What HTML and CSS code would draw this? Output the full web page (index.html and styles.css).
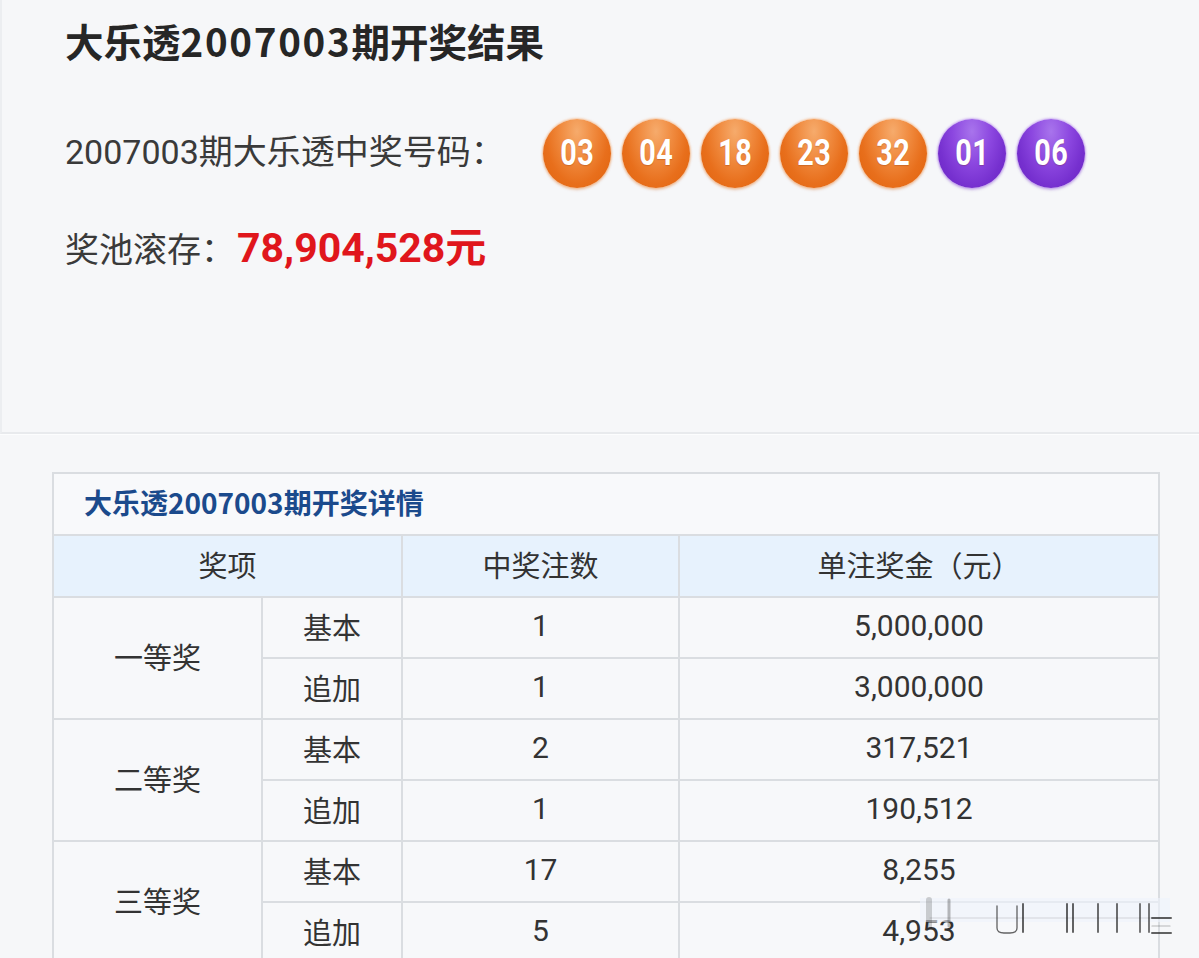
FILE: index.html
```html
<!DOCTYPE html>
<html lang="zh-CN">
<head>
<meta charset="utf-8">
<title>大乐透2007003期开奖结果</title>
<link rel="stylesheet" href="styles.css">
</head>
<body>
<div class="page">
  <section class="summary">
    <h1 class="title">大乐透<span class="title-num">2007003</span>期开奖结果</h1>
    <div class="draw-row">
      <span class="draw-label">2007003期大乐透中奖号码：</span>
      <ul class="balls">
        <li class="ball ball-front"><span class="ball-num">03</span></li>
        <li class="ball ball-front"><span class="ball-num">04</span></li>
        <li class="ball ball-front"><span class="ball-num">18</span></li>
        <li class="ball ball-front"><span class="ball-num">23</span></li>
        <li class="ball ball-front"><span class="ball-num">32</span></li>
        <li class="ball ball-back"><span class="ball-num">01</span></li>
        <li class="ball ball-back"><span class="ball-num">06</span></li>
      </ul>
    </div>
    <div class="pool-row">
      <span class="pool-label">奖池滚存：</span><span class="pool-amount">78,904,528元</span>
    </div>
  </section>

  <section class="details">
    <table class="prize-table">
      <colgroup>
        <col class="c1"><col class="c2"><col class="c3"><col class="c4">
      </colgroup>
      <tr class="caption-row"><td colspan="4" class="caption">大乐透2007003期开奖详情</td></tr>
      <tr class="head-row">
        <th colspan="2">奖项</th>
        <th>中奖注数</th>
        <th>单注奖金（元）</th>
      </tr>
      <tr>
        <td rowspan="2">一等奖</td><td>基本</td><td class="num">1</td><td class="num">5,000,000</td>
      </tr>
      <tr>
        <td>追加</td><td class="num">1</td><td class="num">3,000,000</td>
      </tr>
      <tr>
        <td rowspan="2">二等奖</td><td>基本</td><td class="num">2</td><td class="num">317,521</td>
      </tr>
      <tr>
        <td>追加</td><td class="num">1</td><td class="num">190,512</td>
      </tr>
      <tr>
        <td rowspan="2">三等奖</td><td>基本</td><td class="num">17</td><td class="num">8,255</td>
      </tr>
      <tr>
        <td>追加</td><td class="num">5</td><td class="num">4,953</td>
      </tr>
    </table>
  </section>

  <div class="watermark" aria-hidden="true">
    <svg width="260" height="44" viewBox="0 0 260 44">
      <rect x="0" y="2" width="250" height="24" fill="#eef4fb" opacity="0.6"/>
      <g stroke="#222" fill="none" stroke-linecap="round">
        <line x1="9" y1="4" x2="9" y2="30" stroke-width="6" opacity="0.2"/>
        <line x1="29" y1="4" x2="29" y2="30" stroke-width="3" opacity="0.3"/>
        <path d="M77 10 V32 Q77 37 84 37 H90 Q97 37 97 32 V10" stroke-width="1.3" opacity="0.7"/>
        <line x1="103" y1="8" x2="103" y2="36" stroke-width="2" opacity="0.7"/>
        <line x1="147" y1="8" x2="147" y2="36" stroke-width="2" opacity="0.7"/>
        <line x1="153" y1="8" x2="153" y2="36" stroke-width="2" opacity="0.7"/>
        <line x1="178" y1="8" x2="178" y2="36" stroke-width="2" opacity="0.65"/>
        <line x1="197" y1="8" x2="197" y2="36" stroke-width="2" opacity="0.65"/>
        <line x1="220" y1="8" x2="220" y2="36" stroke-width="2" opacity="0.6"/>
        <line x1="229" y1="8" x2="229" y2="36" stroke-width="2" opacity="0.6"/>
        <line x1="10" y1="22" x2="250" y2="22" stroke-width="1" opacity="0.15"/>
        <line x1="232" y1="22" x2="251" y2="22" stroke-width="2" opacity="0.7"/>
        <line x1="232" y1="30" x2="250" y2="30" stroke-width="1.2" opacity="0.3"/>
        <line x1="232" y1="37" x2="251" y2="37" stroke-width="2" opacity="0.7"/>
      </g>
    </svg>
  </div>
</div>
</body>
</html>
```

FILE: styles.css
```css
html, body {
  margin: 0;
  padding: 0;
}

body {
  background: #f6f7f9;
  font-family: Roboto, "Noto Sans CJK SC", sans-serif;
  color: #333;
  overflow: hidden;
}

.page {
  position: relative;
  width: 1199px;
  height: 958px;
  overflow: hidden;
}

/* ---------- summary panel ---------- */
.summary {
  box-sizing: border-box;
  height: 434px;
  padding-left: 63px;
  border-left: 2px solid #eceef1;
  border-bottom: 2px solid #e8eaed;
}

.title {
  margin: 0;
  padding-top: 16px;
  font-family: "Noto Sans CJK SC", sans-serif;
  font-size: 38.5px;
  line-height: 48px;
  font-weight: 700;
  color: #262626;
}

.title-num {
  letter-spacing: 1.7px;
}

.draw-row {
  display: flex;
  align-items: center;
  height: 70px;
  margin-top: 54px;
}

.draw-label {
  width: 478px;
  flex: none;
  margin-bottom: 8px;
  font-size: 34px;
  color: #3a3a3a;
}

.balls {
  display: flex;
  gap: 11px;
  list-style: none;
  margin: 0;
  padding: 0;
}

.ball {
  width: 68px;
  height: 69px;
  border-radius: 50%;
  display: flex;
  align-items: center;
  justify-content: center;
  color: #fff;
  font-family: Roboto, sans-serif;
  font-weight: 700;
  font-size: 36px;
  line-height: 1;
  text-shadow: 0 1px 1px rgba(120, 40, 0, 0.25);
}

.ball-num {
  display: inline-block;
  transform: scaleX(0.8);
  letter-spacing: 0.5px;
}

.ball-front {
  background: radial-gradient(ellipse at 50% 18%, #f6ab6c 0%, #f08a3e 35%, #e86f1c 65%, #e0620c 100%);
  box-shadow: 0 0 2px 1px rgba(246, 170, 110, 0.6), 0 2px 3px rgba(200, 90, 20, 0.25);
}

.ball-back {
  background: radial-gradient(ellipse at 50% 18%, #a874ec 0%, #8c47e0 40%, #7630cf 70%, #6a22c2 100%);
  box-shadow: 0 0 2px 1px rgba(180, 130, 240, 0.6), 0 2px 3px rgba(100, 40, 180, 0.25);
}

.pool-row {
  display: flex;
  align-items: baseline;
  margin-top: 36px;
  line-height: 48px;
}

.pool-label {
  font-size: 34px;
  color: #3a3a3a;
}

.pool-amount {
  margin-left: 2px;
  font-size: 41px;
  font-weight: 700;
  color: #e0161c;
}

/* ---------- details table ---------- */
.details {
  padding: 37px 0 0 52px;
  border-top: 1px solid #fcfdfe;
}

.prize-table {
  width: 1106px;
  border-collapse: collapse;
  table-layout: fixed;
  border: 2px solid #dadde1;
}

.c1 { width: 209px; }
.c2 { width: 140px; }
.c3 { width: 277px; }
.c4 { width: 480px; }

.prize-table td,
.prize-table th {
  border: 2px solid #dadde1;
  padding: 0 0 4px;
  text-align: center;
  font-size: 29px;
  font-weight: 400;
  color: #333;
  height: 55px;
  background: #f7f8fa;
}

.prize-table td.num {
  font-size: 30px;
}

.prize-table td.caption {
  text-align: left;
  padding-left: 30px;
  font-family: "Noto Sans CJK SC", sans-serif;
  font-size: 28px;
  font-weight: 700;
  color: #1b4a8c;
  height: 56px;
  background: #f8f9fb;
}

.prize-table th {
  background: #e7f2fd;
  height: 56px;
}

/* ---------- watermark overlay ---------- */
.watermark {
  position: absolute;
  left: 920px;
  top: 896px;
  width: 260px;
  height: 44px;
  pointer-events: none;
}

.watermark svg {
  display: block;
}
```
